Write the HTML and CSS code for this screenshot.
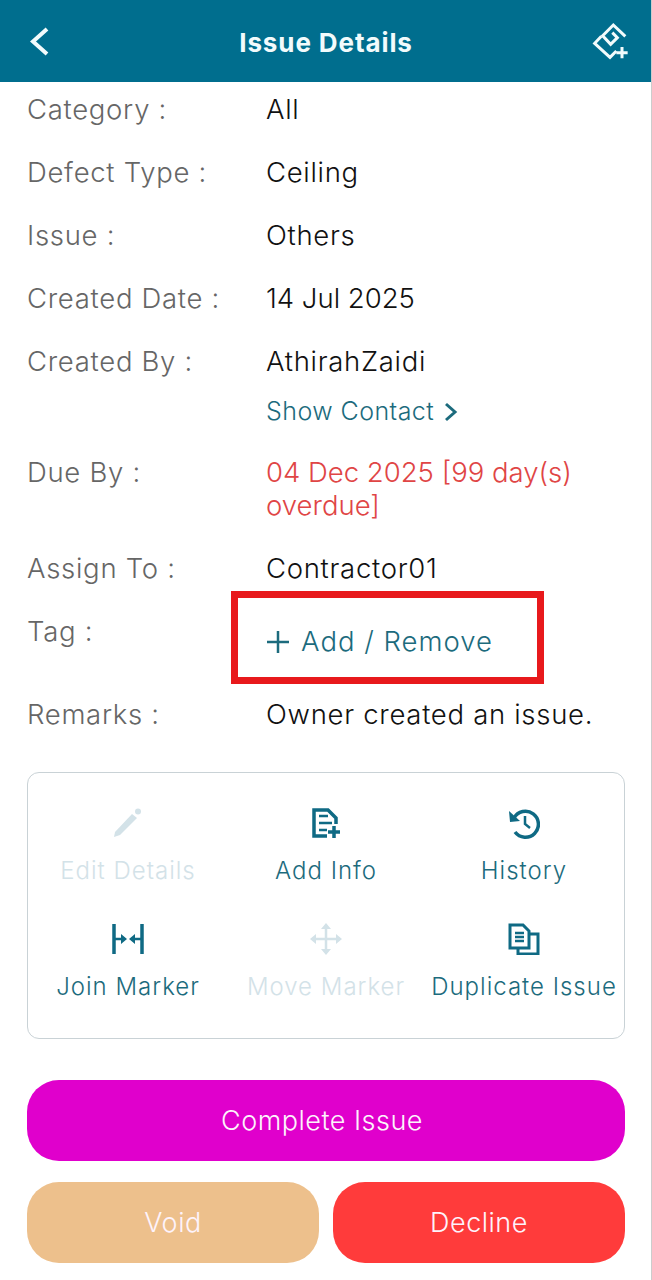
FILE: index.html
```html
<!DOCTYPE html>
<html lang="en">
<head>
  <meta charset="UTF-8" />
  <title>Issue Details</title>
  <link rel="stylesheet" href="styles.css">
</head>
<body>
  <div class="page">

    <!-- Header -->
    <div class="header">
      <svg class="back-icon" viewBox="0 0 24 32"><path d="M19 4 5 16.500 19 29"/></svg>
      <h1>Issue Details</h1>
      <svg class="logo-icon" viewBox="0 0 150 150">
        <path d="M106 64 70 30 38 62l24 26 20-20-15-15"/>
        <path d="M34 64 14 85l46 42 19-19"/>
        <path class="logo-plus" d="M96 96v34M79 113h34"/>
      </svg>
    </div>

    <!-- Details -->
    <div class="details">
      <div class="row"><div class="label">Category :</div><div class="value">All</div></div>
      <div class="row"><div class="label">Defect Type :</div><div class="value">Ceiling</div></div>
      <div class="row"><div class="label">Issue :</div><div class="value">Others</div></div>
      <div class="row"><div class="label">Created Date :</div><div class="value numeric">14 Jul 2025</div></div>
      <div class="row row-contact">
        <div class="label">Created By :</div>
        <div class="value">
          AthirahZaidi
          <a class="show-contact" href="#">Show Contact
            <svg viewBox="0 0 14 20"><path d="M2 2l9 8-9 8"/></svg>
          </a>
        </div>
      </div>
      <div class="row"><div class="label">Due By :</div><div class="value numeric overdue">04 Dec 2025 [99 day(s) overdue]</div></div>
      <div class="row"><div class="label">Assign To :</div><div class="value">Contractor01</div></div>
      <div class="row row-tag">
        <div class="label">Tag :</div>
        <div class="value">
          <a class="add-remove" href="#">
            <svg viewBox="0 0 24 24"><path d="M12 1v22M1 12h22"/></svg>
            Add / Remove
          </a>
          <div class="highlight"></div>
        </div>
      </div>
      <div class="row"><div class="label">Remarks :</div><div class="value">Owner created an issue.</div></div>
    </div>

    <!-- Actions -->
    <div class="actions">
      <div class="action disabled">
        <svg viewBox="0 0 32 32"><path class="fill" d="M2 30l1-5L20 7l5 4L8 28z"/><circle class="fill" cx="26" cy="4.500" r="3"/></svg>
        <span>Edit Details</span>
      </div>
      <div class="action">
        <svg viewBox="0 0 32 32"><path class="thick" d="M17 29H4V3h14l8 8v6"/><path class="thin" d="M9 9h9M9 16h13M9 23h8"/><path class="thick" d="M24 19v12M18 25h12"/></svg>
        <span>Add Info</span>
      </div>
      <div class="action">
        <svg viewBox="0 0 32 32"><path class="thick" d="M6 11A13 13 0 1 1 7 25"/><path class="fill" d="M1 4l11 10-10 1z"/><path class="thin" d="M17 9v8l5 4"/></svg>
        <span>History</span>
      </div>
      <div class="action">
        <svg viewBox="0 0 32 32"><path class="thick" d="M2 1v30M30 1v30"/><path class="thin" d="M2 16h9M30 16h-9"/><path class="fill" d="M9 11l6 5-6 5zM23 11l-6 5 6 5z"/></svg>
        <span>Join Marker</span>
      </div>
      <div class="action disabled">
        <svg viewBox="0 0 32 32"><path class="thin" d="M16 3v26M3 16h26"/><path class="fill" d="M16 0l5 6H11zM16 32l5-6H11zM0 16l6-5v10zM32 16l-6-5v10z"/></svg>
        <span>Move Marker</span>
      </div>
      <div class="action">
        <svg viewBox="0 0 32 32"><path d="M21 25H2V2h13l6 6zM21 11h9v20H10v-6"/><path class="thin" d="M7 10h9M7 14h9M7 18h9"/></svg>
        <span>Duplicate Issue</span>
      </div>
    </div>

    <!-- Buttons -->
    <button class="btn btn-complete">Complete Issue</button>
    <div class="btn-row">
      <button class="btn btn-void">Void</button>
      <button class="btn btn-decline">Decline</button>
    </div>

  </div>
</body>
</html>
```

FILE: styles.css
```css
* {
  box-sizing: border-box;
}

body {
  margin: 0;
  font-family: Inter, "Open Sans", sans-serif;
  background-color: #fff;
  color: #111;
}

.page {
  width: 652px;
  height: 1280px;
  overflow: hidden;
  border-right: 1px solid #ccc;
}

/* Header */
.header {
  height: 82px;
  background-color: #006e8e;
  display: flex;
  align-items: center;
  justify-content: space-between;
  padding: 0 11px 0 28px;
}

.header h1 {
  margin: 3px 0 0 10px;
  color: #f2fbfc;
  font-size: 26px;
  font-weight: 700;
  letter-spacing: 0.9px;
}

.back-icon {
  width: 24px;
  height: 32px;
  fill: none;
  stroke: #f2fbfc;
  stroke-width: 4;
}

.logo-icon {
  width: 50px;
  height: 50px;
  margin-top: -2px;
  fill: none;
  stroke: #f2fbfc;
  stroke-width: 9;
}

/* Details */
.details {
  padding: 11px 27px 0;
}

.row {
  display: grid;
  grid-template-columns: 239px 1fr;
  font-size: 27.5px;
  font-weight: 300;
  letter-spacing: 0.7px;
  line-height: 33px;
  padding-bottom: 30px;
}

.label {
  color: #666;
}

.numeric {
  letter-spacing: 0;
}

.overdue {
  color: #e04545;
}

.row-contact {
  padding-bottom: 28px;
}

.show-contact {
  display: flex;
  align-items: center;
  gap: 10px;
  margin-top: 17px;
  color: #1c6b7d;
  text-decoration: none;
  font-size: 25px;
  letter-spacing: 0.45px;
}

.show-contact svg {
  width: 14px;
  height: 20px;
  fill: none;
  stroke: #1c6b7d;
  stroke-width: 3;
}

.row-tag {
  padding-bottom: 40px;
}

.row-tag .value {
  position: relative;
  padding-top: 10px;
}

.add-remove {
  display: flex;
  align-items: center;
  gap: 11px;
  color: #1c6b7d;
  text-decoration: none;
  letter-spacing: 1px;
}

.add-remove svg {
  width: 24px;
  height: 24px;
  fill: none;
  stroke: #1c6b7d;
  stroke-width: 2.500;
}

.highlight {
  position: absolute;
  left: -35px;
  top: -24px;
  width: 313px;
  height: 93px;
  border: 7px solid #e8191c;
}

/* Actions */
.actions {
  width: 598px;
  height: 267px;
  margin: 11px 27px 0;
  padding: 34px 1px 0;
  border: 1px solid #c9d2d6;
  border-radius: 12px;
  display: grid;
  grid-template-columns: repeat(3, 1fr);
  grid-auto-rows: 116px;
}

.action {
  display: flex;
  flex-direction: column;
  align-items: center;
  color: #1c6b7d;
  font-size: 24px;
  font-weight: 300;
  letter-spacing: 1px;
  line-height: 30px;
  white-space: nowrap;
}

.action svg {
  width: 32px;
  height: 32px;
  margin-bottom: 17px;
  fill: none;
  stroke: #0f6a84;
  stroke-width: 3;
}

.action svg .fill {
  fill: #0f6a84;
  stroke: none;
}

.action svg .thick {
  stroke-width: 3.500;
}

.action svg .thin {
  stroke-width: 2.500;
}

.action.disabled {
  color: #d3e2e8;
}

.action.disabled svg {
  stroke: #d3e2e8;
}

.action.disabled svg .fill {
  fill: #d3e2e8;
}

/* Buttons */
.btn {
  display: block;
  width: 598px;
  height: 81px;
  margin: 41px 27px 0;
  border: none;
  border-radius: 32px;
  color: #fdf3fb;
  font-family: inherit;
  font-size: 27px;
  font-weight: 300;
  letter-spacing: 0.5px;
}

.btn-complete {
  padding-right: 14px;
  background-color: #e000cc;
}

.btn-row {
  display: flex;
  gap: 14px;
  width: 598px;
  margin: 21px 27px 0;
}

.btn-row .btn {
  flex: 1;
  width: auto;
  margin: 0;
}

.btn-void {
  background-color: #edc08c;
}

.btn-decline {
  background-color: #ff3b3b;
}
```
